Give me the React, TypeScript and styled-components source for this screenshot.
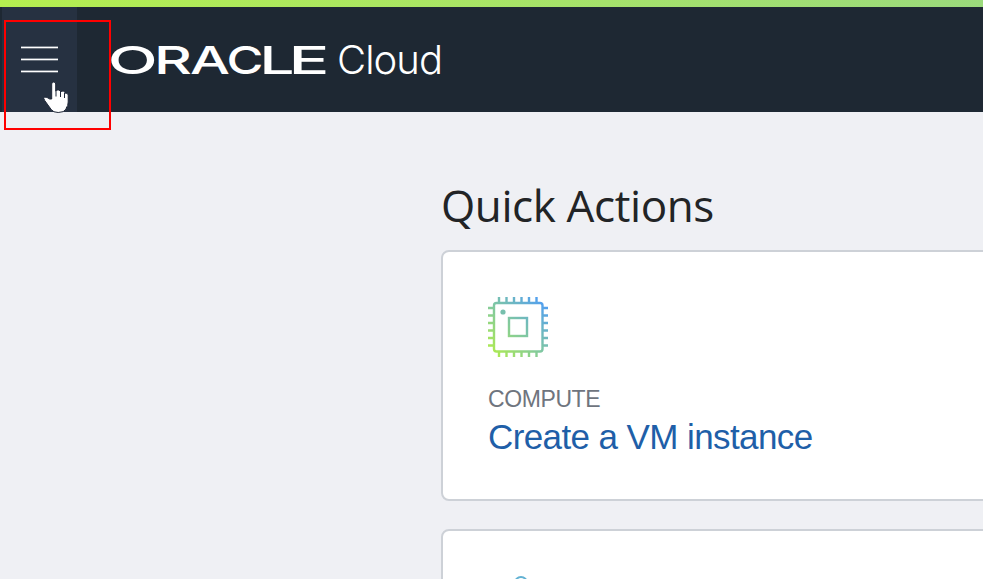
import React from "react";
import styled, { createGlobalStyle } from "styled-components";

const GlobalStyle = createGlobalStyle`
  * { box-sizing: border-box; }
  html, body { margin: 0; height: 579px; overflow: hidden; background: #eff0f4; }
`;

const Page = styled.div`
  position: relative;
  width: 983px;
  height: 579px;
  overflow: hidden;
  background: #eff0f4;
  font-family: "Liberation Sans", Arial, sans-serif;
`;

const AccentBar = styled.div`
  height: 7px;
  background: linear-gradient(90deg, #b5ef50 0%, #9bda7c 100%);
`;

const Header = styled.header`
  display: flex;
  height: 105px;
  padding-left: 2px;
  background: #1e2833;
`;

const MenuButton = styled.button`
  display: flex;
  flex-direction: column;
  gap: 9px;
  width: 75px;
  height: 105px;
  padding: 39px 19px 0;
  border: 0;
  background: #263141;
`;

const MenuLine = styled.span`
  display: block;
  width: 37px;
  height: 3px;
  background: linear-gradient(#7a828c 33.3%, #fff 33.3% 66.6%, #69717c 66.6%);
`;

const Brand = styled.svg`
  display: block;
  margin-left: 23px;
`;

const Main = styled.main`
  display: flex;
  flex-direction: column;
  width: 600px;
  margin-left: 441px;
`;

const Title = styled.h1`
  height: 138px;
  margin: 0;
  padding-top: 63px;
  color: #222426;
  font: 400 44px/60px "Open Sans", "Noto Sans", sans-serif;
  letter-spacing: -0.4px;
  white-space: nowrap;
`;

const CardList = styled.div`
  display: flex;
  flex-direction: column;
  gap: 28px;
`;

const Card = styled.section`
  height: 251px;
  padding: 45px 45px 0;
  border: 2px solid #cdd1d7;
  border-radius: 8px;
  background: #fff;
`;

const CardIcon = styled.svg`
  display: block;
`;

const Category = styled.div`
  margin-top: 28px;
  color: #6f757e;
  font-size: 23px;
  line-height: 28px;
  letter-spacing: -0.4px;
`;

const CardLink = styled.a`
  display: block;
  margin-top: 1px;
  color: #1f5fa8;
  font-size: 35px;
  line-height: 46px;
  letter-spacing: -0.6px;
  white-space: nowrap;
`;

const Highlight = styled.div`
  position: absolute;
  left: 4px;
  top: 20px;
  width: 107px;
  height: 110px;
  border: 2px solid #f00;
`;

const Pointer = styled.svg`
  position: absolute;
  left: 44px;
  top: 81px;
`;

const teeth = [11, 18.5, 26, 33.5, 41, 48.5];

const wordmark = [
  { letter: "O", x: 107.8, width: 50 },
  { letter: "R", x: 154, width: 38 },
  { letter: "A", x: 190, width: 40 },
  { letter: "C", x: 226.5, width: 37 },
  { letter: "L", x: 259.5, width: 35 },
  { letter: "E", x: 288.5, width: 41 },
];

function OracleCloud() {
  return (
    <Brand width="350" height="105" viewBox="100 7 350 105" fill="#fff" fontFamily="Inter, sans-serif">
      <text y="74" fontWeight="500" fontSize="38.5">
        {wordmark.map(({ letter, x, width }) => (
          <tspan key={letter} x={x} textLength={width} lengthAdjust="spacingAndGlyphs">
            {letter}
          </tspan>
        ))}
      </text>
      <text x="337" y="74" fontWeight="300" fontSize="40" textLength="106">
        Cloud
      </text>
    </Brand>
  );
}

function ChipIcon() {
  return (
    <CardIcon width="60" height="60" viewBox="0 0 60 60" fill="none">
      <defs>
        <linearGradient id="chip" gradientUnits="userSpaceOnUse" x1="5" y1="57" x2="55" y2="5">
          <stop offset="0" stopColor="#aeeb50" />
          <stop offset=".5" stopColor="#7fc7a3" />
          <stop offset="1" stopColor="#529ff0" />
        </linearGradient>
      </defs>
      <g stroke="url(#chip)" strokeWidth="2.4">
        <rect x="6" y="6" width="48.5" height="48.5" rx="2.5" />
        <rect x="21" y="21" width="18" height="18" />
        {teeth.map((p) => (
          <path key={p} d={`M${p} 0v6M${p} 54v6M0 ${p}h6M54 ${p}h6`} />
        ))}
      </g>
      <circle cx="15" cy="15" r="2.6" fill="#77bfad" />
    </CardIcon>
  );
}

export default function App() {
  return (
    <Page>
      <GlobalStyle />
      <AccentBar />
      <Header>
        <MenuButton aria-label="Menu">
          <MenuLine />
          <MenuLine />
          <MenuLine />
        </MenuButton>
        <OracleCloud />
      </Header>
      <Main>
        <Title>Quick Actions</Title>
        <CardList>
          <Card>
            <ChipIcon />
            <Category>COMPUTE</Category>
            <CardLink>Create a VM instance</CardLink>
          </Card>
          <Card>
            <CardIcon width="60" height="60" viewBox="0 0 60 60" fill="none">
              <circle cx="33" cy="7" r="6" stroke="#62b2d3" strokeWidth="2" />
            </CardIcon>
          </Card>
        </CardList>
      </Main>
      <Highlight />
      <Pointer width="26" height="33" viewBox="0 0 26 33">
        <path
          d="M8.500 18V3q0-2 2-2t2 2v7q1-1.500 3-1t2 2q1-1.300 2.800-.8t1.700 2q2.500-.7 3 1.800v7q0 4-2 6v1q-2 3.500-8 3.500-5 0-7-3l-6.500-9q-2-3 0-3.300 2-.5 5 1.800z"
          transform="translate(-.8 0)"
          fill="#fff"
          stroke="#202838"
          strokeWidth="1"
        />
        <path d="M12 9.500v6M16.500 11v5M20.500 12v5" stroke="#202838" strokeWidth="1" />
      </Pointer>
    </Page>
  );
}
